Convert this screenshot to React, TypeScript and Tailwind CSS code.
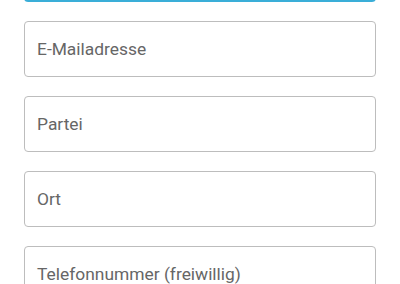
import React from "react";

const fields = ["Name", "E-Mailadresse", "Partei", "Ort", "Telefonnummer (freiwillig)"];

export default function App() {
  return (
    <div className="w-[400px] h-[284px] overflow-hidden bg-white" style={{ fontFamily: "Roboto, 'Noto Sans', sans-serif" }}>
      <div className="flex flex-col gap-[19px] px-[24px] mt-[-54px]">
        {fields.map((f, i) => (
          <div
            key={f}
            className={
              i === 0
                ? "h-[56px] rounded-[4px] border-2 border-[#3aaed8] flex items-center pl-[12px] text-[17.4px] text-[#666666]"
                : "h-[56px] rounded-[4px] border border-[#bdbdbd] flex items-center pl-[12px] text-[17.4px] text-[#666666]"
            }
          >
            {i === 0 ? "" : f}
          </div>
        ))}
      </div>
    </div>
  );
}
